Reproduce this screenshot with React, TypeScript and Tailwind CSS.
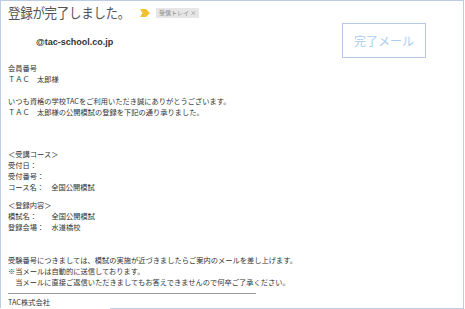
import React from 'react';

const jp = { fontFamily: '"Noto Sans CJK JP", "Noto Sans", sans-serif' };

function Line({ children }: { children?: React.ReactNode }) {
  return <div className="h-[11px] leading-[11px] whitespace-nowrap">{children}</div>;
}

export default function App() {
  return (
    <div className="w-[465px] h-[309px] bg-white overflow-hidden" style={jp}>
      <div className="relative w-[464px] h-[308px] border-l border-t border-r border-[#bccbe6] pl-[7px]">
        {/* header */}
        <div className="flex items-center h-[24px]">
          <span className="text-[12.5px] leading-[16px] text-[#555] tracking-[-0.3px] scale-y-110 origin-bottom">登録が完了しました。</span>
          <svg width="10" height="8" viewBox="0 0 10 8" className="ml-[10px]">
            <path d="M0 0 H6 L10 4 L6 8 H0 L2.5 4 Z" fill="#f3c12e" />
          </svg>
          <span className="ml-[6px] bg-[#e6e6e6] text-[#888] text-[6px] leading-[10px] px-[3px] rounded-[1px]">受信トレイ ×</span>
        </div>

        <div className="flex items-start justify-between pr-[37px]">
          <div className="pl-[28px] pt-[11px] text-[9px] font-bold text-[#333]" style={{ fontFamily: '"Liberation Sans", Arial, sans-serif' }}>
            @tac-school.co.jp
          </div>
          <div className="w-[84px] h-[35px] border border-[#b8c8ea] flex items-center justify-center text-[12px] text-[#a9cdf0] mt-[-2px]">
            完了メール
          </div>
        </div>

        <div className="text-[7.25px] text-[#333] mt-[5px]">
          <Line>会員番号</Line>
          <Line>ＴＡＣ　太郎様</Line>
          <Line />
          <Line>いつも資格の学校TACをご利用いただき誠にありがとうございます。</Line>
          <Line>ＴＡＣ　太郎様の公開模試の登録を下記の通り承りました。</Line>
          <Line />
          <Line />
          <div className="h-[9px]" />
          <Line>＜受講コース＞</Line>
          <Line>受付日：</Line>
          <Line>受付番号：</Line>
          <Line>コース名：　全国公開模試</Line>
          <div className="h-[7px]" />
          <Line>＜登録内容＞</Line>
          <Line>模試名：　　全国公開模試</Line>
          <Line>登録会場：　水道橋校</Line>
          <Line />
          <div className="h-[11px]" />
          <Line>受験番号につきましては、模試の実施が近づきましたらご案内のメールを差し上げます。</Line>
          <Line>※当メールは自動的に送信しております。</Line>
          <Line>　当メールに直接ご返信いただきましてもお答えできませんので何卒ご了承ください。</Line>
          <div className="w-[248px] h-px bg-[#9a9a9a] mt-[5px] mb-[3px]" />
          <Line>TAC株式会社</Line>
        </div>
        <div className="absolute left-[109px] right-[-1px] bottom-[-1px] h-px bg-[#bccbe6]" />
      </div>
    </div>
  );
}
